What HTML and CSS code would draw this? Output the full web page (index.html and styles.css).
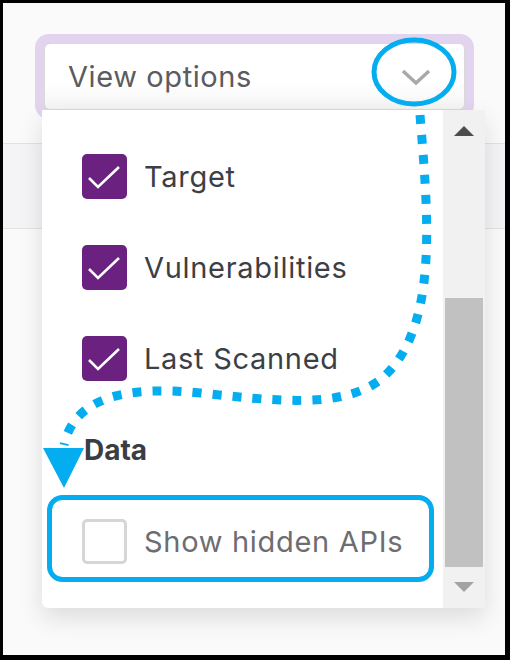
FILE: index.html
```html
<!DOCTYPE html>
<html lang="en">
<head>
  <meta charset="UTF-8">
  <meta name="viewport" content="width=device-width, initial-scale=1.0">
  <link rel="stylesheet" href="styles.css">
</head>
<body>
  <div class="frame">
    <div class="page">
      <div class="select-ring">
        <div class="select">
          <span class="select-label">View options</span>
          <svg class="chevron" width="30" height="16" viewBox="0 0 30 16">
            <path d="M2 2 L15 14 L28 2" fill="none" stroke="#a9a9a9" stroke-width="3.5"/>
          </svg>
        </div>
      </div>

      <div class="table-head"></div>

      <div class="menu">
        <div class="menu-list">
          <div class="option">
            <span class="box checked">
              <svg width="45" height="45" viewBox="0 0 45 45"><path d="M7 24 L16 33 L37 13" fill="none" stroke="#fff" stroke-width="2.6"/></svg>
            </span>
            <span class="option-label">Target</span>
          </div>
          <div class="option">
            <span class="box checked">
              <svg width="45" height="45" viewBox="0 0 45 45"><path d="M7 24 L16 33 L37 13" fill="none" stroke="#fff" stroke-width="2.6"/></svg>
            </span>
            <span class="option-label">Vulnerabilities</span>
          </div>
          <div class="option">
            <span class="box checked">
              <svg width="45" height="45" viewBox="0 0 45 45"><path d="M7 24 L16 33 L37 13" fill="none" stroke="#fff" stroke-width="2.6"/></svg>
            </span>
            <span class="option-label">Last Scanned</span>
          </div>
          <div class="group-title">Data</div>
          <div class="option">
            <span class="box"></span>
            <span class="option-label muted">Show hidden APIs</span>
          </div>
        </div>
        <div class="scrollbar">
          <div class="scroll-btn"><span class="arrow-up"></span></div>
          <div class="scroll-track"><div class="scroll-thumb"></div></div>
          <div class="scroll-btn"><span class="arrow-down"></span></div>
        </div>
      </div>
    </div>
  </div>

  <!-- annotation drawn over the screenshot -->
  <svg class="callout" width="510" height="660" viewBox="0 0 510 660">
    <ellipse cx="414" cy="72" rx="40" ry="32" fill="none" stroke="#04adef" stroke-width="5"/>
    <path d="M420 115 C 428 215, 440 330, 380 380 C 340 410, 270 400, 200 393 C 130 386, 75 395, 64 445"
          fill="none" stroke="#04adef" stroke-width="9" stroke-dasharray="9 11"/>
    <polygon points="43,448 84,448 64,488" fill="#04adef"/>
    <rect x="49.5" y="497.5" width="382" height="82" rx="13" fill="none" stroke="#04adef" stroke-width="5"/>
  </svg>
</body>
</html>
```

FILE: styles.css
```css
body {
  margin: 0;
  position: relative;
  font-family: 'Inter', 'Noto Sans', sans-serif;
  background-color: #000;
}
.frame {
  width: 502px;
  height: 652px;
  border-style: solid;
  border-color: #000;
  border-width: 3px 5px 5px 3px;
  background-color: #fafafa;
}
.page {
  position: relative;
  height: 652px;
  padding-top: 31px;
  box-sizing: border-box;
}
.select-ring {
  margin-left: 32px;
  width: 439px;
  padding: 9px;
  box-sizing: border-box;
  background-color: #e2d3ee;
  border-radius: 14px;
}
.select {
  display: flex;
  align-items: center;
  justify-content: space-between;
  height: 65px;
  padding: 0 33px 0 23px;
  background: linear-gradient(#ffffff 60%, #f4f4f4);
  border: 1px solid #d9d9d9;
  border-radius: 6px;
}
.select-label {
  font-size: 29px;
  letter-spacing: 0.6px;
  color: #5b5b60;
}
.table-head {
  margin-top: 24px;
  height: 84px;
  border-top: 1px solid #e2e2e2;
  border-bottom: 1px solid #e2e2e2;
  background-color: #f4f4f6;
}
.menu {
  position: absolute;
  left: 39px;
  top: 107px;
  width: 443px;
  height: 498px;
  display: flex;
  background-color: #fff;
  border-radius: 0 0 6px 6px;
  box-shadow: 0 10px 24px rgba(0, 0, 0, 0.12);
}
.menu-list {
  flex: 1;
  padding: 21px 0 0 40px;
}
.option {
  display: flex;
  align-items: center;
  height: 91px;
}
.box {
  width: 45px;
  height: 45px;
  box-sizing: border-box;
  border: 3px solid #d6d6d6;
  border-radius: 5px;
  margin-right: 17px;
  flex-shrink: 0;
}
.box.checked {
  border: none;
  background-color: #6a2180;
}
.box svg {
  display: block;
}
.option-label {
  font-size: 29px;
  letter-spacing: 0.7px;
  color: #3c3f46;
}
.option-label.muted {
  color: #6d6d72;
}
.group-title {
  display: flex;
  align-items: center;
  height: 92px;
  font-size: 28px;
  font-weight: bold;
  color: #3a3d44;
  padding-left: 2px;
}
.scrollbar {
  width: 42px;
  display: flex;
  flex-direction: column;
  background-color: #f1f1f1;
}
.scroll-btn {
  height: 42px;
  display: flex;
  align-items: center;
  justify-content: center;
}
.arrow-up {
  border-left: 10px solid transparent;
  border-right: 10px solid transparent;
  border-bottom: 10px solid #4d4d4d;
}
.arrow-down {
  border-left: 10px solid transparent;
  border-right: 10px solid transparent;
  border-top: 10px solid #a3a3a3;
}
.scroll-track {
  flex: 1;
  padding: 146px 2px 0;
}
.scroll-thumb {
  height: 269px;
  background-color: #c1c1c1;
}
.callout {
  position: absolute;
  top: 0;
  left: 0;
  pointer-events: none;
}
```
